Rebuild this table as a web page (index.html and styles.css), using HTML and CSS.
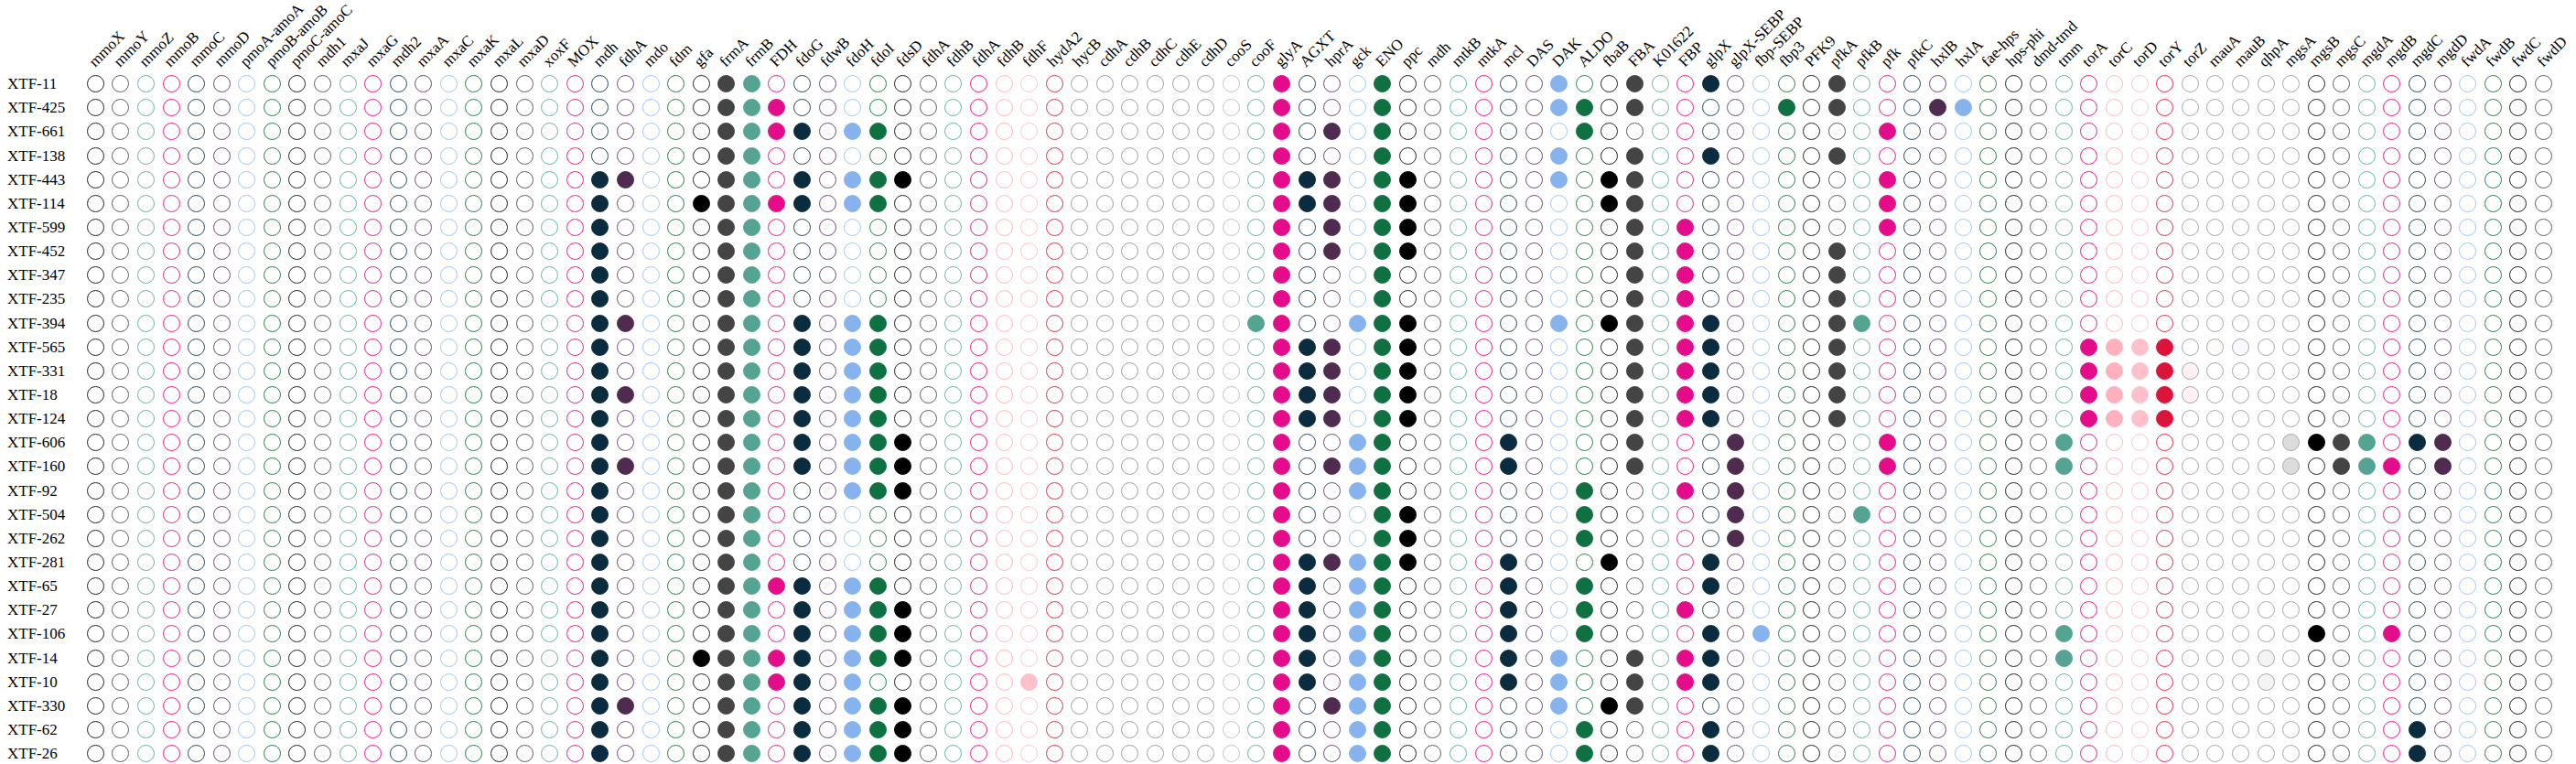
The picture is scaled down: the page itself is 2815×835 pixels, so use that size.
FILE: index.html
```html
<!DOCTYPE html>
<html lang="en">
<head>
<meta charset="utf-8">
<title>Gene presence matrix</title>
<link rel="stylesheet" href="styles.css">
</head>
<body>
<div class="chart">
  <div class="head">
    <span class="corner"></span>
    <div class="gene"><span>mmoX</span></div><div class="gene"><span>mmoY</span></div><div class="gene"><span>mmoZ</span></div><div class="gene"><span>mmoB</span></div><div class="gene"><span>mmoC</span></div><div class="gene"><span>mmoD</span></div><div class="gene"><span>pmoA-amoA</span></div><div class="gene"><span>pmoB-amoB</span></div><div class="gene"><span>pmoC-amoC</span></div><div class="gene"><span>mdh1</span></div>
    <div class="gene"><span>mxaJ</span></div><div class="gene"><span>mxaG</span></div><div class="gene"><span>mdh2</span></div><div class="gene"><span>mxaA</span></div><div class="gene"><span>mxaC</span></div><div class="gene"><span>mxaK</span></div><div class="gene"><span>mxaL</span></div><div class="gene"><span>mxaD</span></div><div class="gene"><span>xoxF</span></div><div class="gene"><span>MOX</span></div>
    <div class="gene"><span>mdh</span></div><div class="gene"><span>fdhA</span></div><div class="gene"><span>mdo</span></div><div class="gene"><span>fdm</span></div><div class="gene"><span>gfa</span></div><div class="gene"><span>frmA</span></div><div class="gene"><span>frmB</span></div><div class="gene"><span>FDH</span></div><div class="gene"><span>fdoG</span></div><div class="gene"><span>fdwB</span></div>
    <div class="gene"><span>fdoH</span></div><div class="gene"><span>fdoI</span></div><div class="gene"><span>fdsD</span></div><div class="gene"><span>fdhA</span></div><div class="gene"><span>fdhB</span></div><div class="gene"><span>fdhA</span></div><div class="gene"><span>fdhB</span></div><div class="gene"><span>fdhF</span></div><div class="gene"><span>hydA2</span></div><div class="gene"><span>hycB</span></div>
    <div class="gene"><span>cdhA</span></div><div class="gene"><span>cdhB</span></div><div class="gene"><span>cdhC</span></div><div class="gene"><span>cdhE</span></div><div class="gene"><span>cdhD</span></div><div class="gene"><span>cooS</span></div><div class="gene"><span>cooF</span></div><div class="gene"><span>glyA</span></div><div class="gene"><span>AGXT</span></div><div class="gene"><span>hprA</span></div>
    <div class="gene"><span>gck</span></div><div class="gene"><span>ENO</span></div><div class="gene"><span>ppc</span></div><div class="gene"><span>mdh</span></div><div class="gene"><span>mtkB</span></div><div class="gene"><span>mtkA</span></div><div class="gene"><span>mcl</span></div><div class="gene"><span>DAS</span></div><div class="gene"><span>DAK</span></div><div class="gene"><span>ALDO</span></div>
    <div class="gene"><span>fbaB</span></div><div class="gene"><span>FBA</span></div><div class="gene"><span>K01622</span></div><div class="gene"><span>FBP</span></div><div class="gene"><span>glpX</span></div><div class="gene"><span>glpX-SEBP</span></div><div class="gene"><span>fbp-SEBP</span></div><div class="gene"><span>fbp3</span></div><div class="gene"><span>PFK9</span></div><div class="gene"><span>pfkA</span></div>
    <div class="gene"><span>pfkB</span></div><div class="gene"><span>pfk</span></div><div class="gene"><span>pfkC</span></div><div class="gene"><span>hxlB</span></div><div class="gene"><span>hxlA</span></div><div class="gene"><span>fae-hps</span></div><div class="gene"><span>hps-phi</span></div><div class="gene"><span>dmd-tmd</span></div><div class="gene"><span>tmm</span></div><div class="gene"><span>torA</span></div>
    <div class="gene"><span>torC</span></div><div class="gene"><span>torD</span></div><div class="gene"><span>torY</span></div><div class="gene"><span>torZ</span></div><div class="gene"><span>mauA</span></div><div class="gene"><span>mauB</span></div><div class="gene"><span>qhpA</span></div><div class="gene"><span>mgsA</span></div><div class="gene"><span>mgsB</span></div><div class="gene"><span>mgsC</span></div>
    <div class="gene"><span>mgdA</span></div><div class="gene"><span>mgdB</span></div><div class="gene"><span>mgdC</span></div><div class="gene"><span>mgdD</span></div><div class="gene"><span>fwdA</span></div><div class="gene"><span>fwdB</span></div><div class="gene"><span>fwdC</span></div><div class="gene"><span>fwdD</span></div>
  </div>
  <div class="row" data-on="25,26,47,51,58,61,64,69"><span class="rl">XTF-11</span></div>
  <div class="row" data-on="25,26,27,47,51,58,59,61,67,69,73,74"><span class="rl">XTF-425</span></div>
  <div class="row" data-on="25,26,27,28,30,31,47,49,51,59,71"><span class="rl">XTF-661</span></div>
  <div class="row" data-on="25,26,47,51,58,61,64,69"><span class="rl">XTF-138</span></div>
  <div class="row" data-on="20,21,25,26,28,30,31,32,47,48,49,51,52,58,60,61,71"><span class="rl">XTF-443</span></div>
  <div class="row" data-on="20,24,25,26,27,28,30,31,47,48,49,51,52,60,61,71"><span class="rl">XTF-114</span></div>
  <div class="row" data-on="20,25,26,47,49,51,52,61,63,71"><span class="rl">XTF-599</span></div>
  <div class="row" data-on="20,25,26,47,49,51,52,61,63,69"><span class="rl">XTF-452</span></div>
  <div class="row" data-on="20,25,26,47,51,61,63,69"><span class="rl">XTF-347</span></div>
  <div class="row" data-on="20,25,26,47,51,61,63,69"><span class="rl">XTF-235</span></div>
  <div class="row" data-on="20,21,25,26,28,30,31,46,47,50,51,52,58,60,61,63,64,69,70"><span class="rl">XTF-394</span></div>
  <div class="row" data-on="20,25,26,28,30,31,47,48,49,51,52,61,63,64,69,79,80,81,82,84,85"><span class="rl">XTF-565</span></div>
  <div class="row" data-on="20,25,26,28,30,31,47,48,49,51,52,61,63,64,69,79,80,81,82,83"><span class="rl">XTF-331</span></div>
  <div class="row" data-on="20,21,25,26,28,30,31,47,48,49,51,52,61,63,64,69,79,80,81,82,83"><span class="rl">XTF-18</span></div>
  <div class="row" data-on="20,25,26,28,30,31,47,48,49,51,52,61,63,64,69,79,80,81,82"><span class="rl">XTF-124</span></div>
  <div class="row" data-on="20,25,26,28,30,31,32,47,50,51,56,61,65,71,78,87,88,89,90,92,93"><span class="rl">XTF-606</span></div>
  <div class="row" data-on="20,21,25,26,28,30,31,32,47,49,50,51,56,61,65,71,78,87,89,90,91,93"><span class="rl">XTF-160</span></div>
  <div class="row" data-on="20,25,26,30,31,32,47,50,51,59,63,65"><span class="rl">XTF-92</span></div>
  <div class="row" data-on="20,25,26,47,51,52,59,65,70"><span class="rl">XTF-504</span></div>
  <div class="row" data-on="20,25,26,47,51,52,59,65"><span class="rl">XTF-262</span></div>
  <div class="row" data-on="20,25,26,47,48,49,50,51,52,56,60,64"><span class="rl">XTF-281</span></div>
  <div class="row" data-on="20,25,26,27,28,30,31,47,48,50,51,56,59,64"><span class="rl">XTF-65</span></div>
  <div class="row" data-on="20,25,26,28,30,31,32,47,48,50,51,56,59,63"><span class="rl">XTF-27</span></div>
  <div class="row" data-on="20,25,26,28,30,31,32,47,48,50,51,56,59,64,66,78,88,91"><span class="rl">XTF-106</span></div>
  <div class="row" data-on="20,24,25,26,27,28,30,31,32,47,48,50,51,56,58,61,63,64,78,86"><span class="rl">XTF-14</span></div>
  <div class="row" data-on="20,25,26,27,28,30,37,47,48,50,51,56,58,61,63,64,86"><span class="rl">XTF-10</span></div>
  <div class="row" data-on="20,21,25,26,28,30,31,32,47,49,50,51,58,60,61"><span class="rl">XTF-330</span></div>
  <div class="row" data-on="20,25,26,28,30,31,32,47,50,51,59,64,92"><span class="rl">XTF-62</span></div>
  <div class="row" data-on="20,25,26,28,30,31,32,47,50,51,59,64,92"><span class="rl">XTF-26</span></div>
</div>
<script src="script.js"></script>
</body>
</html>
```

FILE: styles.css
```css
html, body {
  margin: 0;
  padding: 0;
  background: #ffffff;
  overflow: hidden;
}

body {
  font-family: "Liberation Serif", "Times New Roman", serif;
  color: #000000;
}

.chart {
  padding: 8px 0 0 8px;
}

.head,
.row {
  display: grid;
  grid-template-columns: 82.5px repeat(98, 27.58px);
}

.head {
  height: 70.6px;
}

.gene {
  display: flex;
  align-items: flex-end;
  padding: 0 0 3px 15px;
}

.gene span {
  display: block;
  width: 0;
  white-space: nowrap;
  font-size: 17px;
  line-height: 17px;
  transform-origin: 0 100%;
  transform: rotate(-45deg);
}

.row {
  height: 26.15px;
  align-items: center;
}

.rl {
  font-size: 17px;
  line-height: 1;
  white-space: nowrap;
}

.dot {
  justify-self: center;
  width: 19px;
  height: 19px;
  box-sizing: border-box;
  border: 1.4px solid #999999;
  border-radius: 50%;
}

/* cycling palette */
.k0 { border-color: #262626; }
.k0.on { background: #000000; border-color: #000000; }
.k1 { border-color: #606060; }
.k1.on { background: #444444; border-color: #444444; }
.k2 { border-color: #6cb4a4; }
.k2.on { background: #55a393; border-color: #55a393; }
.k3 { border-color: #e8228f; }
.k3.on { background: #e40c8a; border-color: #e40c8a; }
.k4 { border-color: #2d4b5c; }
.k4.on { background: #0a2c3e; border-color: #0a2c3e; }
.k5 { border-color: #70506f; }
.k5.on { background: #4f2c4f; border-color: #4f2c4f; }
.k6 { border-color: #a2c7f5; }
.k6.on { background: #86b3ee; border-color: #86b3ee; }
.k7 { border-color: #2a8252; }
.k7.on { background: #0f7141; border-color: #0f7141; }

/* special columns */
.lp { border-color: #ffb6c1; }
.lp.on { background: #ffb0bd; border-color: #ffb0bd; }
.pk { border-color: #ffc5cf; }
.pk.on { background: #ffc0cb; border-color: #ffc0cb; }
.cr { border-color: #e0334f; }
.cr.on { background: #dc143c; border-color: #dc143c; }
.gy { border-color: #a0a0a0; }
.sv { border-color: #c4c4c4; }
.lb, .sn, .gw, .ws, .gb { border-color: #a8a8a8; }
.lb.on { background: #fff0f5; }
.sn.on { background: #fffafa; }
.gw.on { background: #f8f8ff; }
.ws.on { background: #f4f4f4; }
.gb.on { background: #dcdcdc; }
```

FILE: script.js
```javascript
(function () {
  var COLS = 98;
  var cyc = ['k0', 'k1', 'k2', 'k3', 'k4', 'k5', 'k6', 'k7'];
  var special = {
    36: 'lp', 37: 'pk', 38: 'cr',
    39: 'gy', 40: 'gy', 41: 'gy', 42: 'gy', 43: 'gy', 44: 'gy', 45: 'sv',
    80: 'lp', 81: 'pk', 82: 'cr',
    83: 'lb', 84: 'sn', 85: 'gw', 86: 'ws', 87: 'gb'
  };
  function key(i) {
    if (special[i]) return special[i];
    if (i < 36 || i >= 88) return cyc[i % 8];
    return cyc[(i - 44) % 8];
  }
  var rows = document.querySelectorAll('.row');
  rows.forEach(function (row) {
    var on = {};
    (row.getAttribute('data-on') || '').split(',').forEach(function (v) {
      if (v !== '') on[parseInt(v, 10)] = true;
    });
    var frag = document.createDocumentFragment();
    for (var i = 0; i < COLS; i++) {
      var d = document.createElement('i');
      d.className = 'dot ' + key(i) + (on[i] ? ' on' : '');
      frag.appendChild(d);
    }
    row.appendChild(frag);
  });
})();
```
